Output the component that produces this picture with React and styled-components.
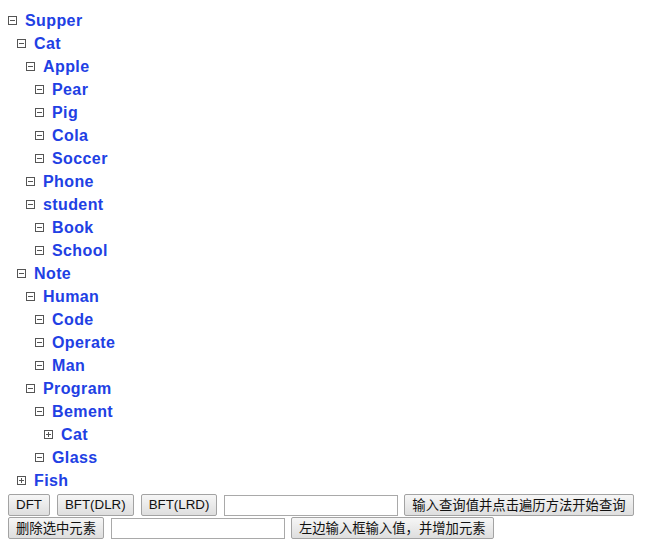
import styled, { createGlobalStyle } from 'styled-components';

const GlobalStyle = createGlobalStyle`
  body {
    margin: 8px;
    padding-top: 1px;
    background: #fff;
    font-family: "Liberation Sans", Arial, sans-serif;
  }
`;

const tree = {
  name: 'Supper',
  children: [
    {
      name: 'Cat',
      children: [
        {
          name: 'Apple',
          children: [{ name: 'Pear' }, { name: 'Pig' }, { name: 'Cola' }, { name: 'Soccer' }],
        },
        { name: 'Phone' },
        { name: 'student', children: [{ name: 'Book' }, { name: 'School' }] },
      ],
    },
    {
      name: 'Note',
      children: [
        {
          name: 'Human',
          children: [{ name: 'Code' }, { name: 'Operate' }, { name: 'Man' }],
        },
        {
          name: 'Program',
          children: [
            { name: 'Bement', children: [{ name: 'Cat', closed: true }] },
            { name: 'Glass' },
          ],
        },
      ],
    },
    { name: 'Fish', closed: true },
  ],
};

const TreeNode = ({ node, root }) => {
  return (
    <Node $root={root}>
      <Row>
        <Toggle $closed={node.closed} />
        <Label>{node.name}</Label>
      </Row>
      {node.children &&
        node.children.map((child, i) => <TreeNode key={child.name + i} node={child} />)}
    </Node>
  );
};

const App = () => {
  return (
    <>
      <GlobalStyle />
      <TreeNode node={tree} root />
      <Controls>
        <Line>
          <Button>DFT</Button>
          <Button>BFT(DLR)</Button>
          <Button>BFT(LRD)</Button>
          <Input />
          <Button $cjk>输入查询值并点击遍历方法开始查询</Button>
        </Line>
        <Line>
          <Button $cjk>删除选中元素</Button>
          <Input />
          <Button $cjk>左边输入框输入值，并增加元素</Button>
        </Line>
      </Controls>
    </>
  );
};

export default App;

const Node = styled.div`
  padding-left: ${({ $root }) => ($root ? '0' : '9px')};
`;

const Row = styled.div`
  display: flex;
  align-items: center;
  height: 23px;
`;

const Toggle = styled.span`
  position: relative;
  box-sizing: border-box;
  width: 9px;
  height: 9px;
  border: 1px solid #555;
  margin-right: 8px;
  flex-shrink: 0;

  &::before {
    content: '';
    position: absolute;
    left: 1px;
    right: 1px;
    top: 3px;
    height: 1px;
    background: #555;
  }

  &::after {
    content: '';
    display: ${({ $closed }) => ($closed ? 'block' : 'none')};
    position: absolute;
    top: 1px;
    bottom: 1px;
    left: 3px;
    width: 1px;
    background: #555;
  }
`;

const Label = styled.span`
  color: #2140e4;
  font-weight: bold;
  font-size: 16px;
  letter-spacing: 0.4px;
  cursor: pointer;
`;

const Controls = styled.div`
  display: flex;
  flex-direction: column;
  gap: 1px;
  margin-top: 2px;
`;

const Line = styled.div`
  display: flex;
  align-items: center;
  gap: 7px;
`;

const Button = styled.button`
  height: 22px;
  padding: 0 7px;
  border: 1px solid #a3a3a3;
  border-radius: 2px;
  background: linear-gradient(#f6f6f6, #dedede);
  color: #111;
  font-family: ${({ $cjk }) =>
    $cjk ? '"Noto Sans CJK SC", sans-serif' : '"Liberation Sans", Arial, sans-serif'};
  font-size: 13.33px;
  line-height: 20px;
  cursor: pointer;
`;

const Input = styled.input`
  box-sizing: border-box;
  width: 174px;
  height: 21px;
  margin-right: -1px;
  border: 1px solid #a9a9a9;
  padding: 1px 3px;
  font-size: 13.33px;
`;
